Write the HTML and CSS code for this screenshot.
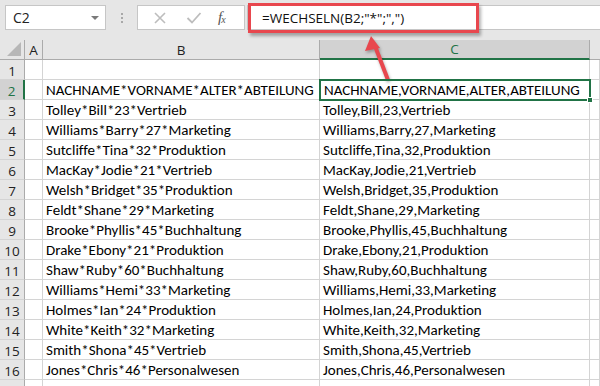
FILE: index.html
```html
<!DOCTYPE html>
<html lang="de">
<head>
<meta charset="utf-8">
<link rel="stylesheet" href="styles.css">
</head>
<body>
<div class="app">
  <div class="fbar">
    <div class="namebox"><span class="nb-text">C2</span><span class="nb-caret"></span></div>
    <div class="grip"><i></i><i></i><i></i></div>
    <div class="btns">
      <svg class="ico" width="14" height="14" viewBox="0 0 14 14"><path d="M2 2 L12 12 M12 2 L2 12" stroke="#bdbdbd" stroke-width="1.6" fill="none"/></svg>
      <svg class="ico" width="16" height="14" viewBox="0 0 16 14"><path d="M1.5 7 L6 11.5 L14.5 2" stroke="#bdbdbd" stroke-width="1.8" fill="none"/></svg>
      <span class="fx">f<sub>x</sub></span>
    </div>
    <div class="formula">=WECHSELN(B2;"*";",")</div>
  </div>

  <div class="sheet">
    <div class="h corner"><span class="tri"></span></div>
    <div class="h">A</div>
    <div class="h">B</div>
    <div class="h sel">C</div>
    <div class="h last"></div>

    <div class="rh">1</div><div class="c"></div><div class="c"></div><div class="c"></div><div class="c last"></div>
    <div class="rh sel">2</div><div class="c"></div><div class="c">NACHNAME*VORNAME*ALTER*ABTEILUNG</div><div class="c active">NACHNAME,VORNAME,ALTER,ABTEILUNG<span class="handle"></span></div><div class="c last"></div>
    <div class="rh">3</div><div class="c"></div><div class="c">Tolley*Bill*23*Vertrieb</div><div class="c">Tolley,Bill,23,Vertrieb</div><div class="c last"></div>
    <div class="rh">4</div><div class="c"></div><div class="c">Williams*Barry*27*Marketing</div><div class="c">Williams,Barry,27,Marketing</div><div class="c last"></div>
    <div class="rh">5</div><div class="c"></div><div class="c">Sutcliffe*Tina*32*Produktion</div><div class="c">Sutcliffe,Tina,32,Produktion</div><div class="c last"></div>
    <div class="rh">6</div><div class="c"></div><div class="c">MacKay*Jodie*21*Vertrieb</div><div class="c">MacKay,Jodie,21,Vertrieb</div><div class="c last"></div>
    <div class="rh">7</div><div class="c"></div><div class="c">Welsh*Bridget*35*Produktion</div><div class="c">Welsh,Bridget,35,Produktion</div><div class="c last"></div>
    <div class="rh">8</div><div class="c"></div><div class="c">Feldt*Shane*29*Marketing</div><div class="c">Feldt,Shane,29,Marketing</div><div class="c last"></div>
    <div class="rh">9</div><div class="c"></div><div class="c">Brooke*Phyllis*45*Buchhaltung</div><div class="c">Brooke,Phyllis,45,Buchhaltung</div><div class="c last"></div>
    <div class="rh">10</div><div class="c"></div><div class="c">Drake*Ebony*21*Produktion</div><div class="c">Drake,Ebony,21,Produktion</div><div class="c last"></div>
    <div class="rh">11</div><div class="c"></div><div class="c">Shaw*Ruby*60*Buchhaltung</div><div class="c">Shaw,Ruby,60,Buchhaltung</div><div class="c last"></div>
    <div class="rh">12</div><div class="c"></div><div class="c">Williams*Hemi*33*Marketing</div><div class="c">Williams,Hemi,33,Marketing</div><div class="c last"></div>
    <div class="rh">13</div><div class="c"></div><div class="c">Holmes*Ian*24*Produktion</div><div class="c">Holmes,Ian,24,Produktion</div><div class="c last"></div>
    <div class="rh">14</div><div class="c"></div><div class="c">White*Keith*32*Marketing</div><div class="c">White,Keith,32,Marketing</div><div class="c last"></div>
    <div class="rh">15</div><div class="c"></div><div class="c">Smith*Shona*45*Vertrieb</div><div class="c">Smith,Shona,45,Vertrieb</div><div class="c last"></div>
    <div class="rh">16</div><div class="c"></div><div class="c">Jones*Chris*46*Personalwesen</div><div class="c">Jones,Chris,46,Personalwesen</div><div class="c last"></div>
    <div class="rh"></div><div class="c"></div><div class="c"></div><div class="c"></div><div class="c last"></div>
  </div>

  <div class="callout"></div>
  <svg class="arrow" width="600" height="386" viewBox="0 0 600 386">
    <line x1="388" y1="80" x2="375" y2="46" stroke="#e8474e" stroke-width="4"/>
    <polygon points="371,36 365,51 380,48" fill="#e8474e"/>
  </svg>
</div>
</body>
</html>
```

FILE: styles.css
```css
* { box-sizing: border-box; }
html, body { margin: 0; padding: 0; background: #fff; }
body { width: 600px; height: 386px; overflow: hidden; }
.app { position: relative; width: 600px; height: 386px; overflow: hidden; font-family: "Open Sans", "Noto Sans", sans-serif; }

.fbar {
  display: flex;
  align-items: stretch;
  height: 40px;
  padding: 5px 0 10px 5px;
  background: #e6e6e6;
}
.namebox {
  width: 101px;
  background: #fff;
  border: 1px solid #c6c6c6;
  display: flex;
  align-items: center;
  justify-content: space-between;
  padding: 0 6px 0 7px;
  font-size: 14px;
  color: #222;
}
.nb-caret {
  width: 0; height: 0;
  border-left: 4px solid transparent;
  border-right: 4px solid transparent;
  border-top: 4px solid #7a7a7a;
}
.grip {
  width: 31px;
  display: flex;
  flex-direction: column;
  align-items: center;
  justify-content: center;
  gap: 2px;
}
.grip i { display: block; width: 2px; height: 2px; background: #a8a8a8; }
.btns {
  width: 108px;
  background: #fff;
  border: 1px solid #c6c6c6;
  display: flex;
  align-items: center;
  padding: 0 0 0 15px;
}
.btns .ico:first-child { margin-right: 19px; }
.btns .ico:nth-child(2) { margin-right: 16px; }
.fx {
  font-family: "Liberation Serif", serif;
  font-style: italic;
  font-size: 15px;
  color: #555;
  line-height: 1;
}
.fx sub { font-size: 10px; vertical-align: -1px; margin-left: -1px; }
.formula {
  flex: 1;
  margin-left: 2px;
  background: #fff;
  border: 1px solid #c6c6c6;
  border-right: none;
  display: flex;
  align-items: center;
  padding-left: 14px;
  font-size: 13.5px;
  color: #111;
  white-space: nowrap;
}

.sheet {
  display: grid;
  grid-template-columns: 25px 18px 277px 270px 10px;
  grid-auto-rows: 20px;
  font-family: "Carlito", "Open Sans", sans-serif;
  font-variant-ligatures: none;
  font-feature-settings: "liga" 0, "clig" 0;
}
.h {
  background: #e6e6e6;
  border-right: 1px solid #ababab;
  border-bottom: 1px solid #ababab;
  font-family: "Open Sans", sans-serif;
  font-size: 13.5px;
  color: #222;
  display: flex;
  align-items: center;
  justify-content: center;
}
.h.corner { position: relative; }
.tri {
  position: absolute;
  right: 3px; bottom: 3px;
  width: 0; height: 0;
  border-left: 14px solid transparent;
  border-bottom: 14px solid #b7b7b7;
}
.h.sel {
  background: #d2d2d2;
  color: #217346;
  border-bottom: 2px solid #217346;
}
.h.last { border-right: none; }
.rh {
  background: #e6e6e6;
  border-right: 1px solid #ababab;
  border-bottom: 1px solid #d4d4d4;
  font-family: "Open Sans", sans-serif;
  font-size: 13.5px;
  color: #222;
  display: flex;
  align-items: center;
  justify-content: center;
  padding-top: 2px;
}
.rh.sel {
  background: #d2d2d2;
  color: #217346;
  border-right: 2px solid #217346;
}
.c {
  border-right: 1px solid #d4d4d4;
  border-bottom: 1px solid #d4d4d4;
  font-size: 15px;
  line-height: 19px;
  padding: 1px 0 0 3px;
  color: #000;
  white-space: nowrap;
  position: relative;
}
.c.active {
  outline: 2px solid #217346;
  outline-offset: -1px;
  z-index: 2;
  padding-left: 4px;
}
.handle {
  position: absolute;
  right: -4px; bottom: -4px;
  width: 6px; height: 6px;
  background: #217346;
  border: 1px solid #fff;
}

.callout {
  position: absolute;
  left: 248px; top: 3px;
  width: 231px; height: 30px;
  border: 3px solid #e8474e;
  box-shadow: 2px 3px 3px rgba(0,0,0,0.3);
}
.arrow {
  position: absolute;
  left: 0; top: 0;
  pointer-events: none;
  filter: drop-shadow(1px 2px 1.5px rgba(0,0,0,0.3));
}
```
